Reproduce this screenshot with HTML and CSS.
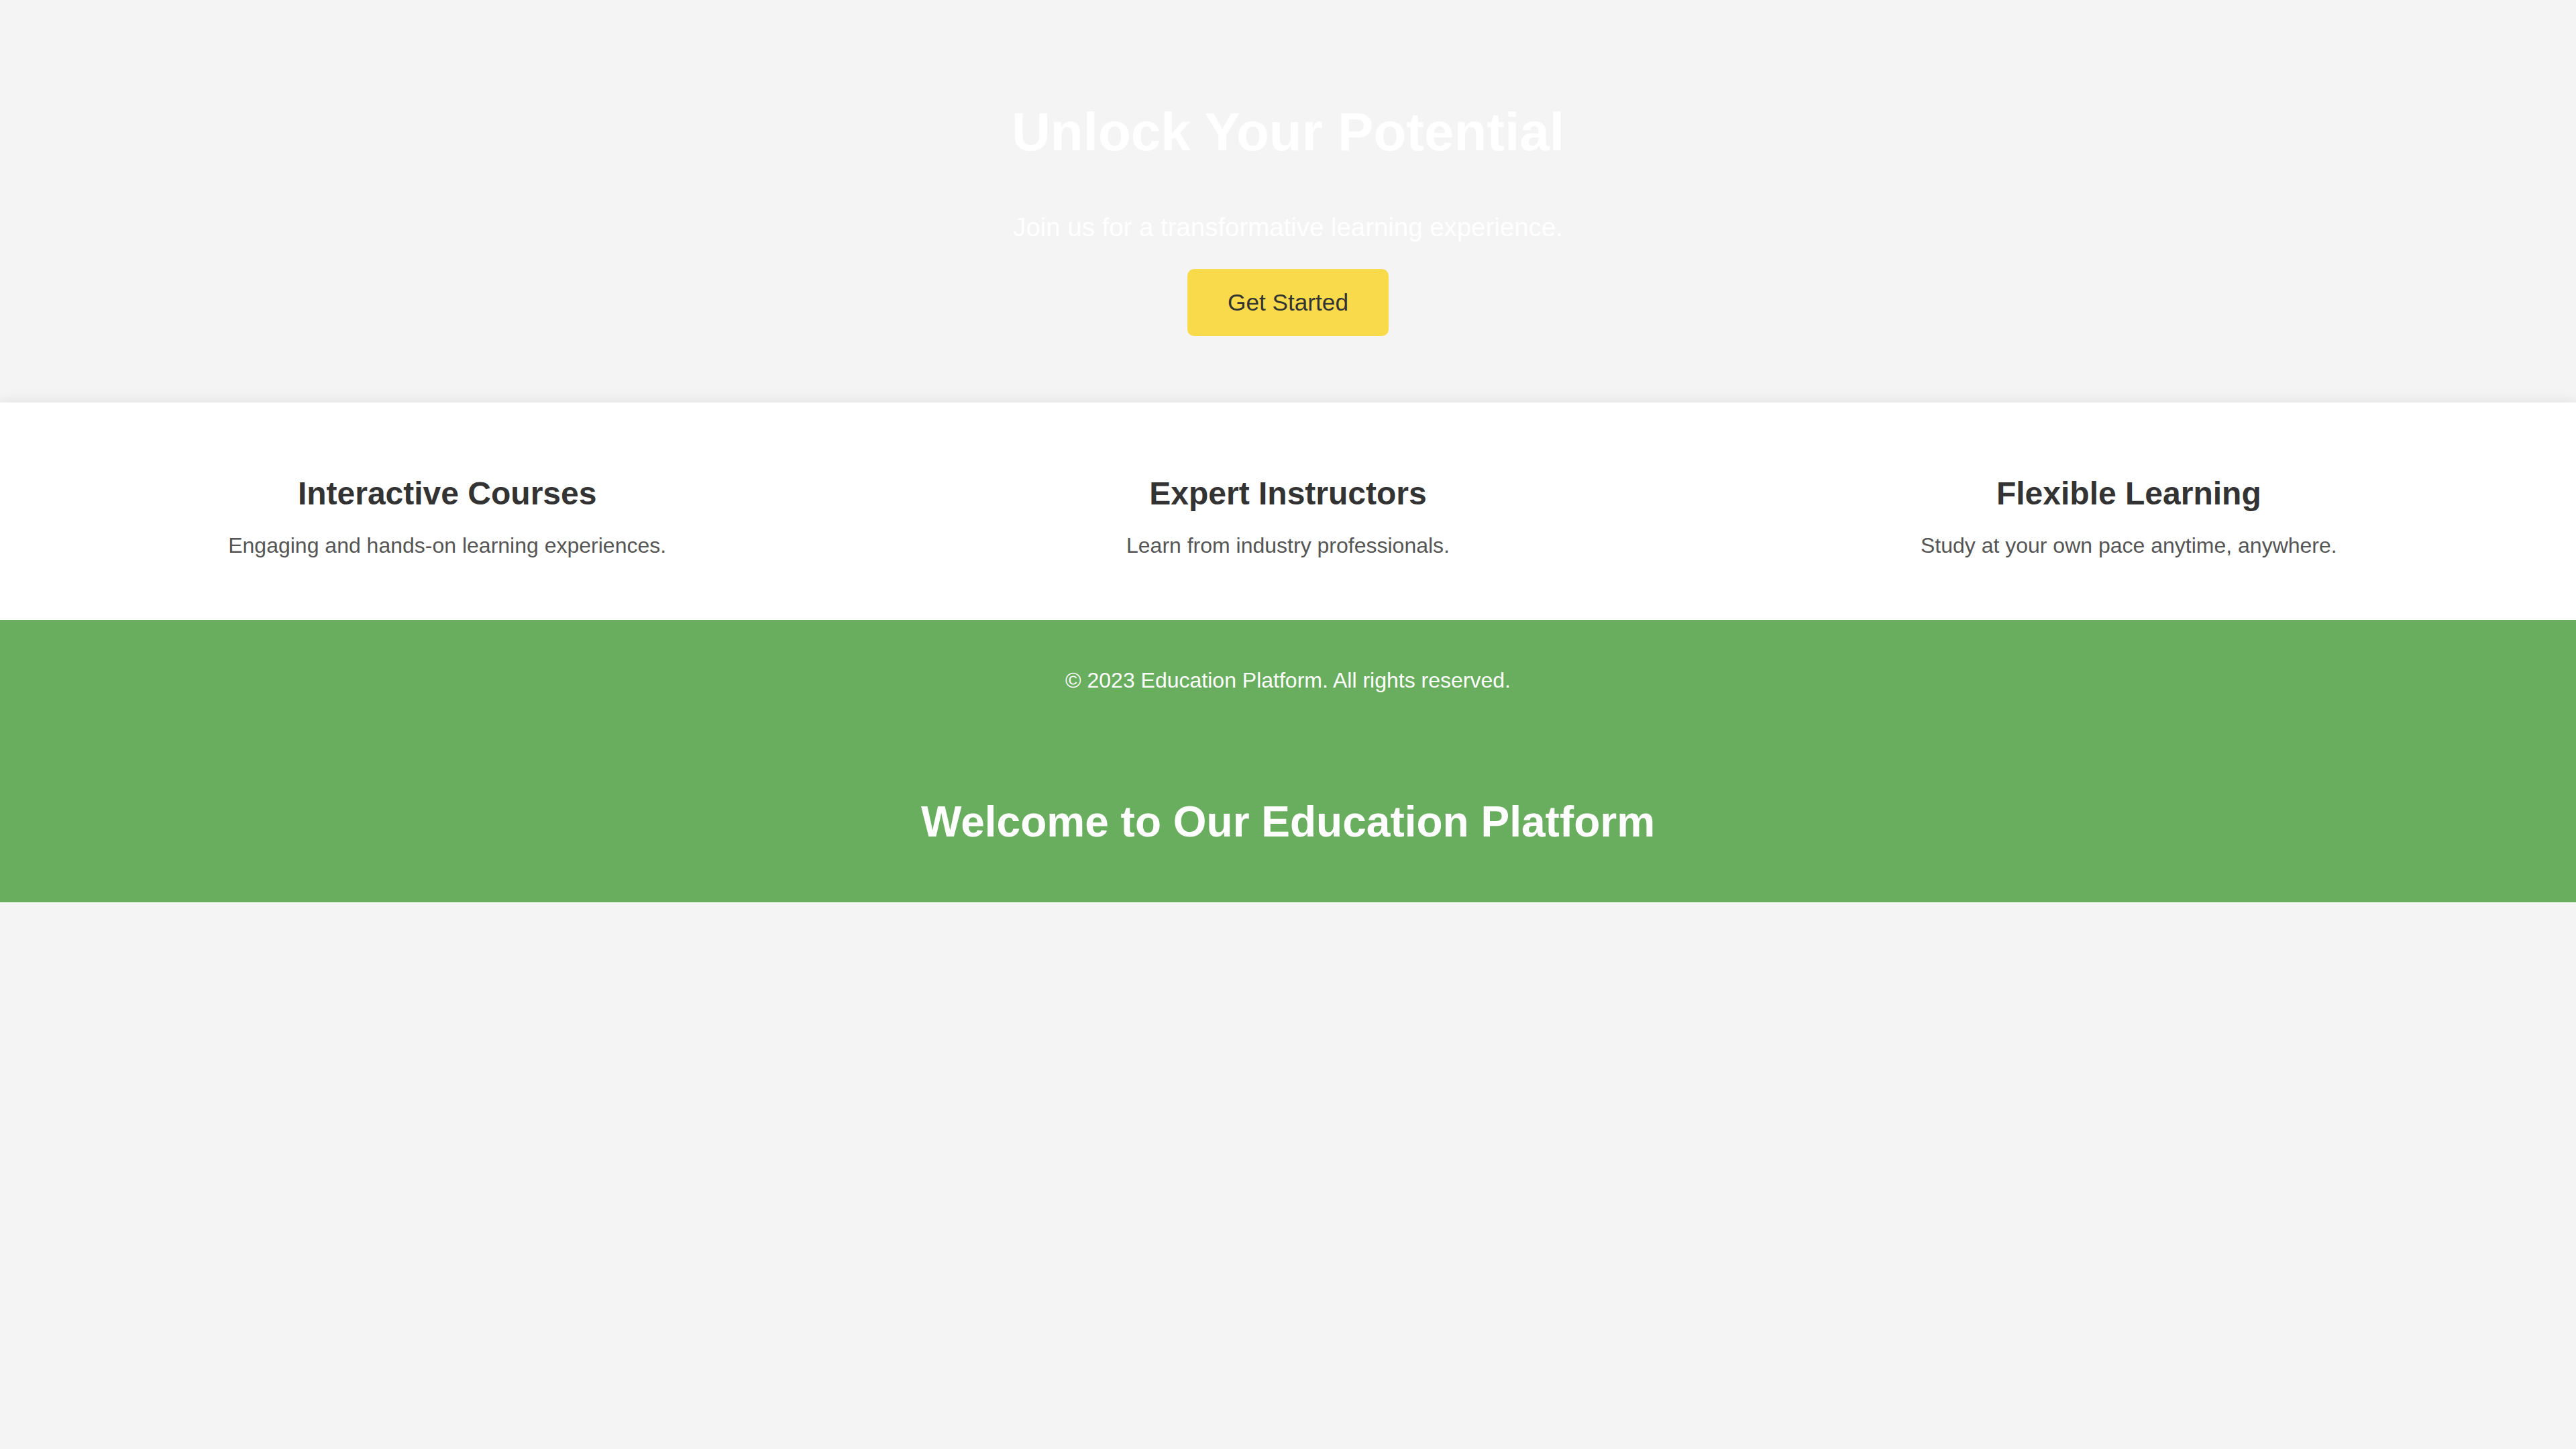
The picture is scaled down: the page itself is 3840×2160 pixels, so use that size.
FILE: index.html
```html
<!DOCTYPE html>
<html lang="en">
<head>
<meta charset="utf-8">
<title>Education Platform</title>
<link rel="stylesheet" href="styles.css">
</head>
<body>
<section class="hero">
  <h1 class="hero-title">Unlock Your Potential</h1>
  <p class="hero-sub">Join us for a transformative learning experience.</p>
  <button class="cta">Get Started</button>
</section>
<section class="features">
  <div class="feature">
    <h3 class="feature-title">Interactive Courses</h3>
    <p class="feature-text">Engaging and hands-on learning experiences.</p>
  </div>
  <div class="feature">
    <h3 class="feature-title">Expert Instructors</h3>
    <p class="feature-text">Learn from industry professionals.</p>
  </div>
  <div class="feature">
    <h3 class="feature-title">Flexible Learning</h3>
    <p class="feature-text">Study at your own pace anytime, anywhere.</p>
  </div>
</section>
<footer class="footer">
  <p class="footer-text">&copy; 2023 Education Platform. All rights reserved.</p>
</footer>
<header class="banner">
  <h1 class="banner-title">Welcome to Our Education Platform</h1>
</header>
</body>
</html>
```
FILE: styles.css
```css
html, body {
  margin: 0;
  padding: 0;
}

body {
  background: #f4f4f4;
  font-family: "Liberation Sans", Arial, sans-serif;
  color: #333;
}

.hero {
  display: flex;
  flex-direction: column;
  align-items: center;
  text-align: center;
  padding: 151px 40px 99px;
  color: #ffffff;
}

.hero-title {
  font-size: 80px;
  font-weight: bold;
  margin: 0 0 74px;
}

.hero-sub {
  font-size: 38.4px;
  margin: 0 0 40px;
}

.cta {
  background: #f9da4b;
  color: #333;
  font-family: "Liberation Sans", Arial, sans-serif;
  font-size: 35.2px;
  line-height: normal;
  padding: 30px 60px;
  border: none;
  border-radius: 10px;
  cursor: pointer;
}

.features {
  display: flex;
  background: #ffffff;
  padding: 40px;
  box-shadow: 0 0 20px rgba(0, 0, 0, 0.1);
}

.feature {
  flex: 1;
  text-align: center;
  padding: 20px;
}

.feature-title {
  font-size: 48px;
  color: #333;
  margin: 48px 0 0;
}

.feature-text {
  font-size: 32px;
  color: #555;
  margin: 32px 0;
}

.footer {
  background: #69ae5e;
  color: #fff;
  text-align: center;
  padding: 40px;
}

.footer-text {
  font-size: 32px;
  margin: 32px 0;
}

.banner {
  background: #69ae5e;
  color: #fff;
  text-align: center;
  padding: 40px;
}

.banner-title {
  font-size: 64px;
  margin: 42.88px 0;
}
```
